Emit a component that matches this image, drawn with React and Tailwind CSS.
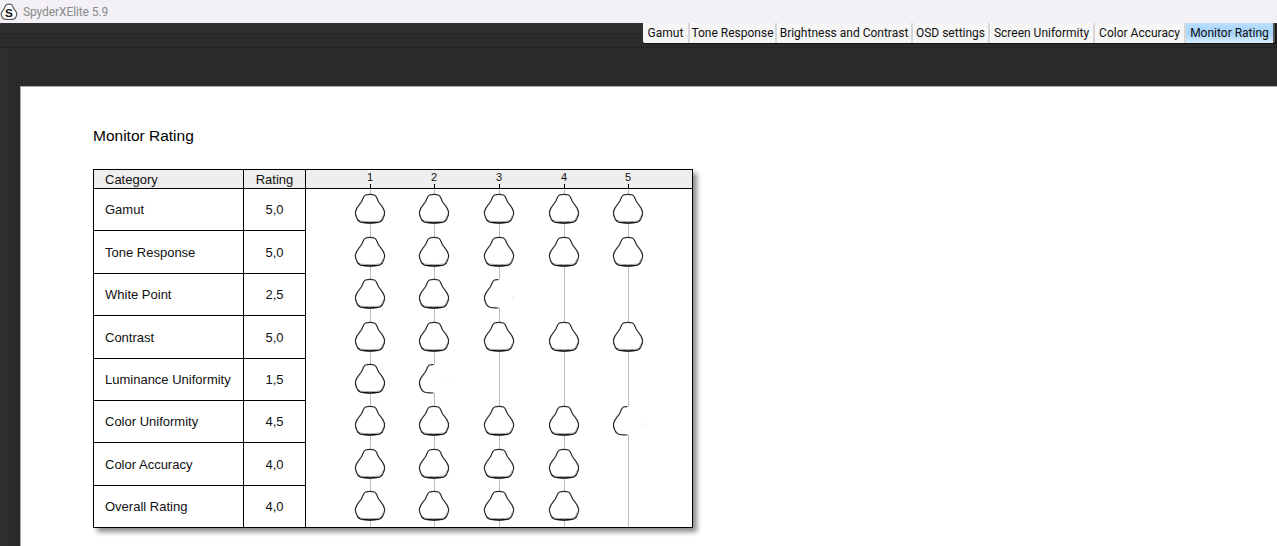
const tabs = [
  { label: 'Gamut', w: 'w-[47px]' },
  { label: 'Tone Response', w: 'w-[87px]' },
  { label: 'Brightness and Contrast', w: 'w-[136px]' },
  { label: 'OSD settings', w: 'w-[77px]' },
  { label: 'Screen Uniformity', w: 'w-[105px]' },
  { label: 'Color Accuracy', w: 'w-[91px]' },
]

const rows = [
  { name: 'Gamut', rating: '5,0', full: 5, half: false, h: 'h-[42px]', text: '', icon: 'pb-[2px]' },
  { name: 'Tone Response', rating: '5,0', full: 5, half: false, h: 'h-[43px]', text: 'pt-[1px]', icon: 'pb-[1px]' },
  { name: 'White Point', rating: '2,5', full: 2, half: true, h: 'h-[42px]', text: '', icon: 'pb-[2px]' },
  { name: 'Contrast', rating: '5,0', full: 5, half: false, h: 'h-[43px]', text: 'pt-[1px]', icon: 'pb-[1px]' },
  { name: 'Luminance Uniformity', rating: '1,5', full: 1, half: true, h: 'h-[42px]', text: '', icon: 'pb-[2px]' },
  { name: 'Color Uniformity', rating: '4,5', full: 4, half: true, h: 'h-[42px]', text: '', icon: 'pb-[2px]' },
  { name: 'Color Accuracy', rating: '4,0', full: 4, half: false, h: 'h-[43px]', text: 'pt-[1px]', icon: 'pb-[1px]' },
  { name: 'Overall Rating', rating: '4,0', full: 4, half: false, h: 'h-[41px]', text: '', icon: 'pb-[1px]' },
]

const SHAPE =
  'M10.5 1 C12.5 0.4 17.5 0.4 19.5 1 C21.8 2 22 5 23.4 7.5 C24.8 10.2 28.4 13 29.5 17.5 C30 20 29.2 22 28.2 24 C27.2 26.6 26 28 23 28.5 C18 29.2 12 29.2 7 28.5 C4 28 2.8 26.6 1.8 24 C0.8 22 0 20 0.5 17.5 C1.6 13 5.2 10.2 6.6 7.5 C8 5 8.2 2 10.5 1 Z'

function SpyderIcon({ half }) {
  return (
    <svg width="30" height="30" viewBox="0 0 30 30" className="relative block overflow-visible">
      <path d={SHAPE} fill="white" stroke="none" />
      {half ? (
        <>
          <path d="M14.5 0.7 C13 0.6 11.5 0.7 10.5 1 C8.2 2 8 5 6.6 7.5 C5.2 10.2 1.6 13 0.5 17.5 C0 20 0.8 22 1.8 24 C2.8 26.6 4 28 7 28.5 C9 28.8 12 29 14.5 29" fill="none" stroke="#2a2a2a" strokeWidth="1.2" />
          <path d="M29 17 L29 21" fill="none" stroke="#eeeeee" strokeWidth="1" />
        </>
      ) : (
        <>
          <path d={SHAPE} fill="none" stroke="#2a2a2a" strokeWidth="1.2" />
          <path d="M3 26 C4.5 28 6 28.2 8 28.4 C12 28.9 18 28.9 22 28.4 C24 28.2 25.5 28 27 26" fill="none" stroke="#111" strokeWidth="1.2" />
          <path d="M5 27 C11 27.8 19 27.8 25 27 C26.5 25.5 27.5 23.5 28 21.5" fill="none" stroke="#a8a8a8" strokeWidth="1" />
        </>
      )}
    </svg>
  )
}

function Cell({ kind, pad }) {
  return (
    <div className={`relative flex items-center justify-center ${pad}`}>
      <div className="absolute top-0 bottom-0 left-1/2 w-px bg-[#bdbdbd]" />
      {kind !== 'none' && <SpyderIcon half={kind === 'half'} />}
    </div>
  )
}

function RatingRow({ row, last }) {
  const cells = [0, 1, 2, 3, 4].map((i) => {
    if (i < row.full) return 'full'
    if (i === row.full && row.half) return 'half'
    return 'none'
  })
  return (
    <div className={`flex ${row.h}`}>
      <div className={`w-[150px] flex items-center pl-[11px] border-r border-black ${row.text} ${last ? '' : 'border-b'}`}>{row.name}</div>
      <div className={`w-[62px] flex items-center justify-center border-r border-black ${row.text} ${last ? '' : 'border-b'}`}>{row.rating}</div>
      <div className="flex-1 pl-[32px] grid grid-cols-[64px_64px_66px_64px_64px]">
        {cells.map((c, i) => (
          <Cell key={i} kind={c} pad={row.icon} />
        ))}
      </div>
    </div>
  )
}

export default function App() {
  return (
    <div className="w-[1277px] h-[546px] overflow-hidden flex flex-col bg-[#2a2a2a] font-['Liberation_Sans',Arial,sans-serif]">
      {/* Title bar */}
      <div className="h-[23px] shrink-0 bg-[#f3f1f6] flex items-center pl-[1px] gap-[6px]">
        <svg width="16" height="16" viewBox="0 0 30 30" className="overflow-visible">
          <path d={SHAPE} fill="white" stroke="#555" strokeWidth="2.2" />
          <text x="15" y="24" textAnchor="middle" fontSize="22" fontWeight="700" fill="#111" fontFamily="Liberation Sans, sans-serif">S</text>
        </svg>
        <span className="text-[12px] text-[#8a8a8a] font-['Roboto',sans-serif] tracking-[-0.1px]">SpyderXElite 5.9</span>
      </div>

      {/* Tab strip */}
      <div className="h-[24px] shrink-0 relative bg-[#303030] flex justify-end pr-[2px]">
        <div className="absolute left-0 right-0 top-[10px] bottom-0 bg-[#2b2b2b] border-t border-[#252525]" />
        <div className="relative flex h-[20px] text-[12px] text-[#111] font-['Roboto',sans-serif] shadow-[1px_1px_1px_#111] rounded-bl-[2px]">
          {tabs.map((t) => (
            <div key={t.label} className={`${t.w} flex items-center justify-center bg-[#f6f6f6] border-r-2 border-[#d6d6d6] whitespace-nowrap first:rounded-bl-[2px]`}>
              {t.label}
            </div>
          ))}
          <div className="w-[89px] flex items-center justify-center whitespace-nowrap bg-gradient-to-b from-[#bcdffc] via-[#a4d2fd] to-[#d8ecfe] border-r-2 border-[#555] rounded-br-[2px]">
            Monitor Rating
          </div>
        </div>
      </div>

      {/* Body */}
      <div className="flex-1 flex border-t border-[#222222] min-h-0">
        <div className="w-[9px] shrink-0 bg-[#303030] border-r border-[#232323] box-content" />
        <div className="flex-1 flex flex-col pl-[10px] min-w-0">
          <div className="h-[38px] shrink-0" />
          {/* Report page */}
          <div className="flex-1 bg-white border-t border-l border-[#a8a8a8] pl-[72px] pt-[40px] text-[13px] text-[#111]">
            <h1 className="text-[15.5px] leading-[18px] font-normal text-black">Monitor Rating</h1>
            <div className="mt-[24px] w-[600px] border border-black shadow-[4px_4px_5px_rgba(0,0,0,0.45)] bg-white">
              {/* Table header */}
              <div className="flex h-[18px] bg-[#eeeeee] border-b border-black box-content">
                <div className="w-[150px] flex items-center pl-[11px] pt-[1px] border-r border-black">Category</div>
                <div className="w-[62px] flex items-center justify-center pt-[1px] border-r border-black">Rating</div>
                <div className="flex-1 pl-[32px] grid grid-cols-[64px_64px_66px_64px_64px] text-[11px]">
                  {[1, 2, 3, 4, 5].map((n) => (
                    <div key={n} className="relative text-center leading-[15px]">
                      {n}
                      <div className="absolute bottom-0 left-1/2 w-px h-[4px] bg-black" />
                    </div>
                  ))}
                </div>
              </div>
              {rows.map((r, i) => (
                <RatingRow key={r.name} row={r} last={i === rows.length - 1} />
              ))}
            </div>
          </div>
        </div>
      </div>
    </div>
  )
}
